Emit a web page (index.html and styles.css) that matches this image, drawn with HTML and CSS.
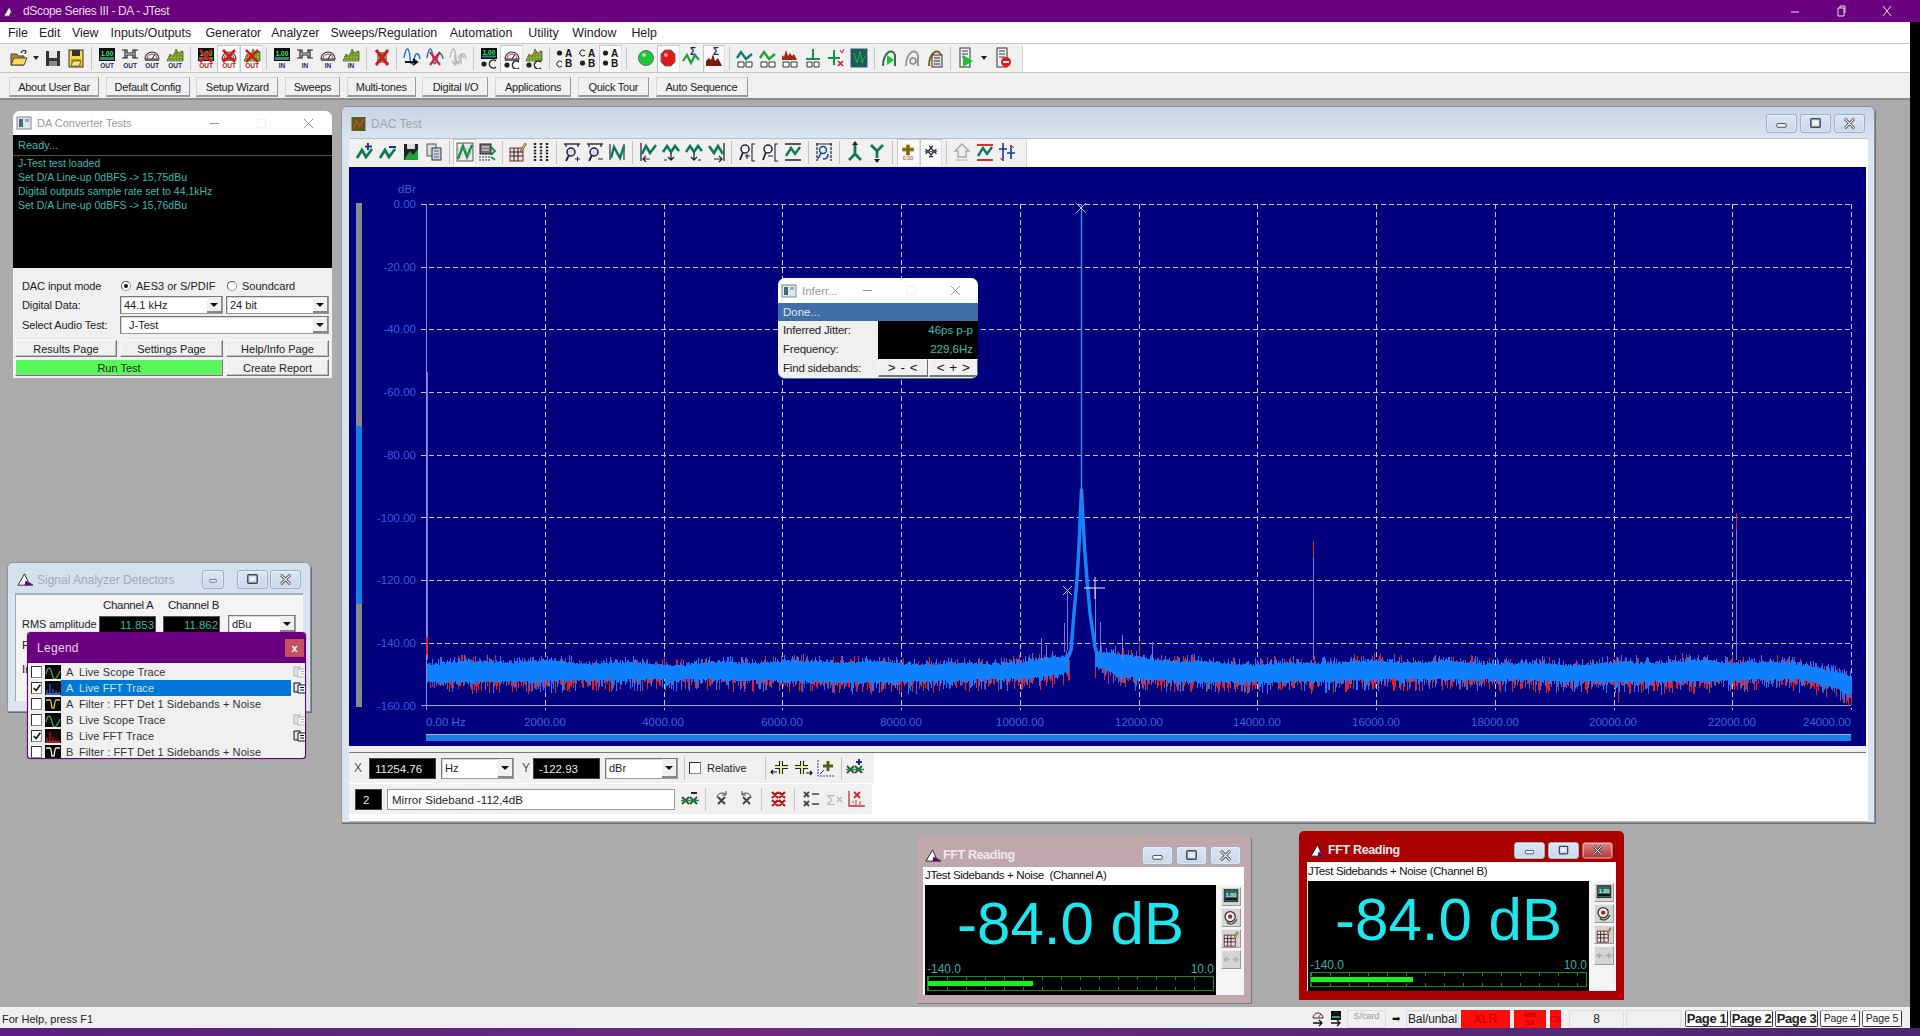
FILE: index.html
```html
<!DOCTYPE html>
<html lang="en">
<head>
<meta charset="utf-8">
<title>dScope Series III - DA - JTest</title>
<link rel="stylesheet" href="styles.css">
</head>
<body>
<svg class="defs" xmlns="http://www.w3.org/2000/svg">
<defs>
<symbol id="logo" viewBox="0 0 18 16"><path d="M1 14L8 2l4 9 5 3z" fill="#fff" stroke="#222" stroke-width="1"/><path d="M9 9l3 2 4 3H8z" fill="#6a007f"/></symbol>
<symbol id="w-min" viewBox="0 0 30 18"><rect x="10" y="9" width="10" height="4" rx="1" fill="#eef3f8" stroke="#445"/></symbol>
<symbol id="w-max" viewBox="0 0 30 18"><rect x="10" y="4" width="10" height="9" rx="1" fill="none" stroke="#445" stroke-width="1.5"/><rect x="13" y="7" width="4" height="3" fill="#fff"/></symbol>
<symbol id="w-close" viewBox="0 0 30 18"><path d="M10 4l10 10M20 4L10 14" stroke="#445" stroke-width="3"/><path d="M10 4l10 10M20 4L10 14" stroke="#fff" stroke-width="1.2"/></symbol>
<symbol id="win-ico" viewBox="0 0 16 16"><rect x="1" y="2" width="14" height="12" fill="#dfe6ee" stroke="#7a8696"/><rect x="3" y="4" width="4" height="8" fill="#3b6f70"/><rect x="9" y="4" width="4" height="3" fill="#9ab"/></symbol>
<symbol id="open" viewBox="0 0 18 22"><path d="M1 7h6l1 2h6v9H1z" fill="#b88f20" stroke="#444"/><path d="M4 11h13l-3 7H1z" fill="#f5dc5a" stroke="#444"/><path d="M11 6c1-3 3-3 5-2l-1 3" fill="none" stroke="#333" stroke-width="1.3"/></symbol>
<symbol id="save" viewBox="0 0 18 22"><rect x="2" y="4" width="14" height="15" fill="#333"/><rect x="5" y="4" width="8" height="7" fill="#e4e4e4"/><rect x="5" y="14" width="8" height="5" fill="#8a8a8a"/></symbol>
<symbol id="savef" viewBox="0 0 18 22"><rect x="2" y="3" width="14" height="17" fill="#f2d84a" stroke="#333"/><rect x="5" y="3" width="8" height="6" fill="#333"/><path d="M4 12h10v7H4z" fill="#b89a18"/><path d="M6 14h8l-2 5H4z" fill="#f8e878" stroke="#333" stroke-width=".6"/></symbol>
<symbol id="meter" viewBox="0 0 18 22"><rect x="1" y="1" width="16" height="13" fill="#0a0a0a"/><text class="il g" x="9" y="8.5">1.00</text><rect x="2" y="10" width="14" height="3" fill="#2a8a80"/></symbol>
<symbol id="filt" viewBox="0 0 18 22"><path d="M1 3h5v3h6V3h5M1 11h5V8h6v3h5M4 3v8M14 3v8" fill="none" stroke="#222" stroke-width="1.2"/></symbol>
<symbol id="gauge" viewBox="0 0 18 22"><path d="M2 12a7 7 0 0 1 14 0z" fill="#f0f0f0" stroke="#333" stroke-width="1.2"/><path d="M4 12a5 5 0 0 1 10 0" fill="none" stroke="#c04040"/><path d="M9 12l3-5" stroke="#222"/><rect x="2" y="12" width="14" height="2" fill="#666"/></symbol>
<symbol id="graph" viewBox="0 0 18 22"><path d="M1 14L4 7l3 3 3-8 3 5 4-3v10z" fill="#6c9a30" stroke="#2a5a20" stroke-width=".7"/><path d="M3 14V9M6 14V6M9 14V4M12 14V7M15 14V6" stroke="#d8d850" stroke-dasharray="1.5 1.5"/><path d="M2 10l14-6" stroke="#c85a20"/></symbol>
<symbol id="redx" viewBox="0 0 18 22"><path d="M3 3l12 12M15 3L3 15" stroke="#d81818" stroke-width="2.6"/></symbol>
<symbol id="xfull" viewBox="0 0 18 22"><rect x="4" y="5" width="10" height="11" fill="#7a9a70"/><path d="M3 3l12 15M15 3L3 18" stroke="#d81818" stroke-width="3"/></symbol>
<symbol id="wavearrow" viewBox="0 0 18 22"><path d="M1 11C3-1 6-1 7 11s4 2 5-2 4-3 5 3" fill="none" stroke="#2a6ac0" stroke-width="1.4"/><path d="M2 15h11M10 12l4 3-4 3" fill="none" stroke="#111" stroke-width="2"/></symbol>
<symbol id="wavered" viewBox="0 0 18 22"><path d="M1 11C3-1 6-1 7 11s4 2 5-2 4-3 5 3" fill="none" stroke="#2a6ac0" stroke-width="1.4"/><path d="M4 5l10 13M14 5L4 18" stroke="#d82030" stroke-width="2.2"/></symbol>
<symbol id="wavegrey" viewBox="0 0 18 22"><path d="M1 11C3-1 6-1 7 11s4 2 5-2 4-3 5 3" fill="none" stroke="#b8b8b8" stroke-width="1.4"/><path d="M6 8v9M3 14l3 4 3-4M12 17V8M9 11l3-4 3 4" fill="none" stroke="#bbb" stroke-width="1.5"/></symbol>
<symbol id="ac-m" viewBox="0 0 18 22"><rect x="1" y="1" width="16" height="11" fill="#0a0a0a"/><text class="il g" x="9" y="7.5">1.00</text><rect x="2" y="8.5" width="14" height="2" fill="#2a8a80"/><circle cx="4" cy="17" r="2.6" fill="#222"/><path d="M16 14a4 4 0 1 0 0 6" fill="none" stroke="#222" stroke-width="1.4"/></symbol>
<symbol id="ac-g" viewBox="0 0 18 22"><use href="#gauge" width="18" height="22"/><circle cx="4" cy="18" r="2.6" fill="#222"/><path d="M16 15a4 4 0 1 0 0 6" fill="none" stroke="#222" stroke-width="1.4"/></symbol>
<symbol id="ac-c" viewBox="0 0 18 22"><use href="#graph" width="18" height="22"/><circle cx="4" cy="18" r="2.6" fill="#222"/><path d="M16 15a4 4 0 1 0 0 6" fill="none" stroke="#222" stroke-width="1.4"/></symbol>
<symbol id="ab1" viewBox="0 0 18 22"><circle cx="3.5" cy="6" r="2.6" fill="#222"/><path d="M6 15a3 3 0 1 0 0 4" fill="none" stroke="#222"/><text class="il ab" x="12.5" y="9.5">A</text><text class="il ab" x="12.5" y="19.5">B</text></symbol>
<symbol id="ab2" viewBox="0 0 18 22"><path d="M6 4a3 3 0 1 0 0 4" fill="none" stroke="#222"/><circle cx="3.5" cy="16" r="2.6" fill="#222"/><text class="il ab" x="12.5" y="9.5">A</text><text class="il ab" x="12.5" y="19.5">B</text></symbol>
<symbol id="ab3" viewBox="0 0 18 22"><circle cx="3.5" cy="6" r="2.6" fill="#222"/><circle cx="3.5" cy="16" r="2.6" fill="#222"/><text class="il ab" x="12.5" y="9.5">A</text><text class="il ab" x="12.5" y="19.5">B</text></symbol>
<symbol id="go" viewBox="0 0 18 22"><circle cx="9" cy="11" r="7.5" fill="#18c838" stroke="#666"/><circle cx="7" cy="8" r="2" fill="#a8f0a8"/></symbol>
<symbol id="stop" viewBox="0 0 18 22"><path d="M6 3h6l4 4v8l-4 4H6l-4-4V7z" fill="#e01818" stroke="#666"/><circle cx="7" cy="8" r="2" fill="#f8a0a0"/></symbol>
<symbol id="sum1" viewBox="0 0 18 22"><text class="il sm" x="11" y="8">Σ</text><path d="M1 14l4-6 4 8 4-8 4 5" fill="none" stroke="#18a040" stroke-width="2.2"/></symbol>
<symbol id="sum2" viewBox="0 0 18 22"><text class="il sm" x="11" y="8">Σ</text><path d="M1 19V14l3-3 2 2 2-6 2 7 3-3 4 8z" fill="#7a1a10"/></symbol>
<symbol id="wv-b1" viewBox="0 0 18 22"><path d="M1 11l4-6 5 7 6-5" fill="none" stroke="#1a7a70" stroke-width="2.4"/><path d="M2 15h6v5H2zM10 15h6v5h-6z" fill="#fff" stroke="#333"/></symbol>
<symbol id="wv-b2" viewBox="0 0 18 22"><path d="M1 11l4-6 5 7 6-5" fill="none" stroke="#20a040" stroke-width="2.4"/><path d="M2 15h6v5H2zM10 15h6v5h-6z" fill="#fff" stroke="#333"/></symbol>
<symbol id="wv-b3" viewBox="0 0 18 22"><path d="M1 13V8l2 2 2-7 2 6 2-3 2 3 2-2 3 6z" fill="#a02818"/><path d="M2 15h6v5H2zM10 15h6v5h-6z" fill="#fff" stroke="#333"/></symbol>
<symbol id="pk-b" viewBox="0 0 18 22"><path d="M9 2v11M2 12h14" stroke="#18904a" stroke-width="2"/><path d="M3 15h5v5H3zM10 15h5v5h-5z" fill="#fff" stroke="#333"/></symbol>
<symbol id="pk-x" viewBox="0 0 18 22"><path d="M7 3v15M1 11h12" stroke="#18904a" stroke-width="2"/><path d="M13 3l2 3 2-4" fill="none" stroke="#c02020"/><path d="M11 14l5 5M16 14l-5 5" stroke="#d02020" stroke-width="1.6"/></symbol>
<symbol id="scope" viewBox="0 0 18 22"><rect x="1" y="2" width="16" height="18" fill="#1a5a58" stroke="#39577a"/><path d="M4 6l3 10 3-12 2 12 3-7" fill="none" stroke="#28b040"/></symbol>
<symbol id="seq1" viewBox="0 0 18 22"><path d="M3 19C3 6 12 0 15 8v11" fill="none" stroke="#307050" stroke-width="2"/><path d="M7 8l7 5-7 5z" fill="#20c030"/></symbol>
<symbol id="seq2" viewBox="0 0 18 22"><path d="M3 19C3 6 12 0 15 8v11" fill="none" stroke="#9a9a9a" stroke-width="2"/><circle cx="10" cy="14" r="3" fill="none" stroke="#8a8a8a" stroke-width="1.6"/></symbol>
<symbol id="seq3" viewBox="0 0 18 22"><path d="M3 19C3 6 12 0 15 8v11" fill="none" stroke="#806020" stroke-width="2"/><rect x="6" y="8" width="10" height="12" fill="#ddd" stroke="#333"/><path d="M8 11h6M8 14h6M8 17h6" stroke="#333"/></symbol>
<symbol id="doc-go" viewBox="0 0 18 22"><rect x="3" y="1" width="10" height="19" fill="#f4f4f4" stroke="#333"/><path d="M5 4h6M5 7h6M5 10h3" stroke="#333"/><path d="M6 8l10 6-10 6z" fill="#20c030"/></symbol>
<symbol id="doc-st" viewBox="0 0 18 22"><rect x="3" y="1" width="10" height="19" fill="#f4f4f4" stroke="#333"/><path d="M5 4h6M5 7h6M5 10h6" stroke="#333"/><circle cx="12" cy="15" r="5" fill="#e01818"/><path d="M9 15h6" stroke="#fff" stroke-width="2"/></symbol>
<symbol id="wplus" viewBox="0 0 18 22"><path d="M1 17l5-8 4 7 6-8" fill="none" stroke="#107858" stroke-width="2.8"/><path d="M12 2v7M9 5.500h7" stroke="#1a3a88" stroke-width="2"/></symbol>
<symbol id="wminus" viewBox="0 0 18 22"><path d="M1 17l5-8 4 7 6-8" fill="none" stroke="#107858" stroke-width="2.8"/><path d="M10 6h7" stroke="#1a3a88" stroke-width="2"/></symbol>
<symbol id="wsave" viewBox="0 0 18 22"><rect x="2" y="3" width="14" height="16" fill="#222"/><rect x="5" y="3" width="8" height="5" fill="#ddd"/><path d="M3 17l5-7 3 4 5-6v11H3z" fill="#20a040"/></symbol>
<symbol id="copy" viewBox="0 0 18 22"><rect x="2" y="3" width="9" height="12" fill="#ddd" stroke="#555"/><rect x="7" y="7" width="9" height="12" fill="#c8d4e4" stroke="#334"/><path d="M9 10h5M9 13h5M9 16h5" stroke="#667"/></symbol>
<symbol id="chart" viewBox="0 0 18 22"><rect x="1" y="2" width="16" height="18" fill="#e8e8e8" stroke="#556"/><path d="M2 18l5-13 4 11 5-12" fill="none" stroke="#109040" stroke-width="2.4"/><path d="M2 8h14M2 13h14" stroke="#999" stroke-dasharray="1 1"/></symbol>
<symbol id="print" viewBox="0 0 18 22"><rect x="2" y="3" width="11" height="10" fill="#777" stroke="#222"/><path d="M4 6h7M4 9h7" stroke="#eee"/><path d="M1 16h12M1 19h12" stroke="#333" stroke-dasharray="2 1"/><path d="M13 6l4 4-4 4M13 16l4 3" fill="none" stroke="#109040" stroke-width="1.8"/></symbol>
<symbol id="table" viewBox="0 0 18 22"><rect x="1" y="7" width="13" height="13" fill="#f2dede" stroke="#822"/><path d="M1 11h13M1 15h13M5 7v13M9 7v13" stroke="#222"/><path d="M11 10l5-8 1.500 1-5 8z" fill="#e8c040" stroke="#333" stroke-width=".6"/></symbol>
<symbol id="nums" viewBox="0 0 18 22"><path d="M3 2v19M9 2v19M15 2v19" stroke="#222" stroke-width="2.400" stroke-dasharray="2 1.200"/><path d="M1 8h16M1 14h16" stroke="#f0f0f0"/></symbol>
<symbol id="zoomp" viewBox="0 0 18 22"><path d="M1 3h16M3 3v3M15 3v3" stroke="#333" stroke-width="1.400"/><circle cx="8" cy="11" r="4" fill="#dde" stroke="#223" stroke-width="1.500"/><path d="M6 14l-3 6" stroke="#223" stroke-width="1.800"/><path d="M12 18h5M14.500 15.500v5" stroke="#223"/></symbol>
<symbol id="zoomm" viewBox="0 0 18 22"><path d="M1 3h16M3 3v3M15 3v3" stroke="#333" stroke-width="1.400"/><circle cx="8" cy="11" r="4" fill="#dde" stroke="#223" stroke-width="1.500"/><path d="M6 14l-3 6" stroke="#223" stroke-width="1.800"/><path d="M12 18h5" stroke="#223"/></symbol>
<symbol id="nwave" viewBox="0 0 18 22"><path d="M2 3v16M16 3v16" stroke="#334" stroke-width="1.200"/><path d="M3 17l3-11 6 11 4-12" fill="none" stroke="#107858" stroke-width="2.400"/></symbol>
<symbol id="wl" viewBox="0 0 18 22"><path d="M2 2v18" stroke="#334" stroke-width="1.400"/><path d="M3 13l4-8 4 7 6-8" fill="none" stroke="#107858" stroke-width="2.600"/><path d="M11 18H4M7 15l-3 3 3 3" fill="none" stroke="#223" stroke-width="1.200"/></symbol>
<symbol id="wm1" viewBox="0 0 18 22"><path d="M1 11l4-6 4 6 4-6 4 5" fill="none" stroke="#107858" stroke-width="2.600"/><path d="M9 12v7M6 16l3 3 3-3" fill="none" stroke="#223" stroke-width="1.300"/><path d="M5 19H2" stroke="#223"/></symbol>
<symbol id="wm2" viewBox="0 0 18 22"><path d="M1 11l4-6 4 6 4-6 4 5" fill="none" stroke="#107858" stroke-width="2.600"/><path d="M9 12v7M6 16l3 3 3-3" fill="none" stroke="#223" stroke-width="1.300"/><path d="M16 19h-3" stroke="#223"/></symbol>
<symbol id="wr" viewBox="0 0 18 22"><path d="M16 2v18" stroke="#334" stroke-width="1.400"/><path d="M1 5l5 7 4-7 5 8" fill="none" stroke="#107858" stroke-width="2.600"/><path d="M6 18h8M11 15l3 3-3 3" fill="none" stroke="#223" stroke-width="1.200"/></symbol>
<symbol id="magl" viewBox="0 0 18 22"><circle cx="7" cy="8" r="4" fill="#fff" stroke="#223" stroke-width="1.500"/><path d="M5 11l-3 8" stroke="#223" stroke-width="1.800"/><path d="M7 15h5M9 13v5M17 3h-3v17h3" fill="none" stroke="#223" stroke-width="1.100"/></symbol>
<symbol id="magm" viewBox="0 0 18 22"><circle cx="7" cy="8" r="4" fill="#fff" stroke="#223" stroke-width="1.500"/><path d="M5 11l-3 8" stroke="#223" stroke-width="1.800"/><path d="M7 15h5M17 3h-3v17h3" fill="none" stroke="#223" stroke-width="1.100"/></symbol>
<symbol id="wbars" viewBox="0 0 18 22"><path d="M1 3h16M1 19h16" stroke="#223" stroke-width="1.300"/><path d="M2 15l5-8 4 6 5-7" fill="none" stroke="#107858" stroke-width="2.400"/></symbol>
<symbol id="autoz" viewBox="0 0 18 22"><path d="M2 2v18M16 2v18" stroke="#223" stroke-width="1.200" stroke-dasharray="3 1"/><path d="M1 3h16" stroke="#223"/><circle cx="8" cy="9" r="3.500" fill="#dfe" stroke="#1a3a88" stroke-width="1.400"/><path d="M6 12l-3 6M13 13c0 5-3 5-5 5" fill="none" stroke="#1a3a88" stroke-width="1.500"/></symbol>
<symbol id="fk-up" viewBox="0 0 18 22"><path d="M9 11v9M9 11L3 5M9 11l6-6" fill="none" stroke="#107858" stroke-width="2.800" transform="rotate(180 9 12)"/><path d="M9 0l3 4H6z" fill="#223"/></symbol>
<symbol id="fk-dn" viewBox="0 0 18 22"><path d="M9 10v7M9 10L3 4M9 10l6-6" fill="none" stroke="#107858" stroke-width="2.800"/><path d="M9 22l3-4H6z" fill="#223"/></symbol>
<symbol id="plusred" viewBox="0 0 22 22"><path d="M11 2v13M4 8h14" stroke="#b08a10" stroke-width="5"/><path d="M11 2v13M4 8h14" stroke="#506830" stroke-width="2"/><text class="il rd" x="11" y="21">0.00</text></symbol>
<symbol id="xx" viewBox="0 0 20 22"><path d="M4 8l5 5M9 8l-5 5M11 8l5 5M16 8l-5 5M8 4l4 5M12 4L8 9M8 12l4 5M12 12l-4 5" stroke="#223" stroke-width="1.400"/><path d="M3 10.500h14" stroke="#107858"/></symbol>
<symbol id="hat" viewBox="0 0 18 22"><path d="M9 3L2 10h3v6h8v-6h3z" fill="#eee" stroke="#aaa" stroke-width="1.500"/><path d="M3 19h12" stroke="#aaa"/></symbol>
<symbol id="wredbars" viewBox="0 0 18 22"><path d="M1 4h16M1 19h16" stroke="#d03030" stroke-width="1.800"/><path d="M2 15l5-8 4 6 5-7" fill="none" stroke="#107858" stroke-width="2.400"/></symbol>
<symbol id="spread" viewBox="0 0 18 22"><path d="M5 2v18M1 8h8M13 4v14M9 12h8" stroke="#1a3a88" stroke-width="1.600"/><path d="M13 4l3 3M5 20l-3-3" stroke="#c02020"/></symbol>
<symbol id="cur-a" viewBox="0 0 20 20"><path d="M11 3v13M5 9h13" stroke="#222" stroke-width="4"/><path d="M11 3v13M5 9h13" stroke="#e8e8a0" stroke-width="2"/><path d="M7 14H1M3 12l-2 2 2 2" fill="none" stroke="#111" stroke-width="1.200"/></symbol>
<symbol id="cur-b" viewBox="0 0 20 20"><path d="M9 3v13M2 9h13" stroke="#222" stroke-width="4"/><path d="M9 3v13M2 9h13" stroke="#e8e8a0" stroke-width="2"/><path d="M13 15h6M17 13l2 2-2 2" fill="none" stroke="#111" stroke-width="1.200"/></symbol>
<symbol id="cur-c" viewBox="0 0 20 20"><path d="M2 2v16h16" fill="none" stroke="#334488" stroke-dasharray="2 1"/><path d="M12 3v10M7 8h10" stroke="#556020" stroke-width="3"/><path d="M4 16l4-4" stroke="#1a3a88"/></symbol>
<symbol id="cur-d" viewBox="0 0 20 20"><path d="M2 8l7 7M9 8l-7 7M10 8l7 7M17 8l-7 7" stroke="#335030" stroke-width="1.800"/><path d="M1 11.500h18" stroke="#109040" stroke-width="1.500"/><path d="M14 1v6M11 4h6" stroke="#1a2a90" stroke-width="2"/></symbol>
<symbol id="cur-e" viewBox="0 0 20 20"><path d="M2 8l7 7M9 8l-7 7M10 8l7 7M17 8l-7 7" stroke="#335030" stroke-width="1.800"/><path d="M1 11.500h18" stroke="#109040" stroke-width="1.500"/><path d="M11 4h6" stroke="#222" stroke-width="2"/></symbol>
<symbol id="cur-f" viewBox="0 0 20 20"><path d="M5 8l7 7M12 8l-7 7" stroke="#444" stroke-width="2"/><path d="M4 9c0-6 8-6 9-3M13 2v4h-4" fill="none" stroke="#444"/></symbol>
<symbol id="cur-g" viewBox="0 0 20 20"><path d="M7 8l7 7M14 8l-7 7" stroke="#444" stroke-width="2"/><path d="M15 9c0-6-8-6-9-3M6 2v4h4" fill="none" stroke="#444"/></symbol>
<symbol id="cur-h" viewBox="0 0 20 20"><path d="M3 3l6 6M9 3L3 9M10 3l6 6M16 3l-6 6M3 11l6 6M9 11l-6 6M10 11l6 6M16 11l-6 6" stroke="#c01818" stroke-width="2.200"/></symbol>
<symbol id="cur-i" viewBox="0 0 20 20"><path d="M2 3l5 5M7 3L2 8M2 12l5 5M7 12l-5 5" stroke="#444" stroke-width="1.800"/><path d="M10 5h7M10 15h7" stroke="#444" stroke-width="1.500"/></symbol>
<symbol id="cur-j" viewBox="0 0 20 20"><text class="il sg" x="7" y="16">Σ</text><path d="M13 8l5 5M18 8l-5 5" stroke="#bbb" stroke-width="1.500"/></symbol>
<symbol id="cur-k" viewBox="0 0 20 20"><path d="M2 2v15h16" fill="none" stroke="#c03030" stroke-width="1.300"/><path d="M7 3l6 6M13 3L7 9" stroke="#c03030" stroke-width="1.800"/><path d="M5 13h2M9 11v5M13 12v4" stroke="#c03030"/></symbol>
<symbol id="sd-m" viewBox="0 0 20 20"><rect x="2" y="2" width="16" height="14" fill="#2a6a68" stroke="#222"/><text class="il g2" x="10" y="10">1.00</text><rect x="3" y="12" width="14" height="2" fill="#0a0a0a"/></symbol>
<symbol id="sd-g" viewBox="0 0 20 20"><circle cx="9" cy="9" r="6" fill="#eee" stroke="#333" stroke-width="1.500"/><circle cx="9" cy="9" r="2.500" fill="#b02020"/><path d="M5 16c4 3 9 2 12-4" fill="none" stroke="#333" stroke-width="1.400"/></symbol>
<symbol id="sd-t" viewBox="0 0 20 20"><rect x="2" y="6" width="13" height="13" fill="#f2dede" stroke="#622"/><path d="M2 10h13M2 14h13M6 6v13M10 6v13" stroke="#222"/><path d="M13 10l4-8 1.500 1-4 8z" fill="#e8c040" stroke="#333" stroke-width=".6"/></symbol>
<symbol id="sd-a" viewBox="0 0 20 20"><path d="M8 10l-4 0M5 7l-3 3 3 3M12 10h4M15 7l3 3-3 3" fill="none" stroke="#aaa" stroke-width="1.500"/></symbol>
<symbol id="l-w" viewBox="0 0 16 14"><rect width="16" height="14" fill="#080808"/><path d="M1 9c2-8 4-8 6 0s4 6 8-3" fill="none" stroke="#38b048" stroke-width="1.300"/></symbol>
<symbol id="l-fb" viewBox="0 0 16 14"><rect width="16" height="14" fill="#080818"/><path d="M1 13h14" stroke="#3a78e8" stroke-width="1.600"/><path d="M5 13V3M2 13V9M8 13V8M11 13v-3M14 13v-2" stroke="#3a78e8"/></symbol>
<symbol id="l-fr" viewBox="0 0 16 14"><rect width="16" height="14" fill="#100808"/><path d="M1 13h14" stroke="#e02020" stroke-width="1.600"/><path d="M5 13V3M2 13V9M8 13V8M11 13v-3M14 13v-2" stroke="#e02020"/></symbol>
<symbol id="l-fy" viewBox="0 0 16 14"><rect width="16" height="14" fill="#080808"/><path d="M1 3h4c1 0 1 2 2 8h2c1-6 1-8 2-8h4" fill="none" stroke="#d8c830" stroke-width="1.300"/></symbol>
<symbol id="l-fw" viewBox="0 0 16 14"><rect width="16" height="14" fill="#080808"/><path d="M1 3h4c1 0 1 2 2 8h2c1-6 1-8 2-8h4" fill="none" stroke="#f0f0f0" stroke-width="1.300"/></symbol>
<symbol id="doc2" viewBox="0 0 14 12"><path d="M1 1h6v9H1z" fill="#dfe0ea" stroke="currentColor"/><path d="M5 3h8v8H5z" fill="#fff" stroke="currentColor"/><path d="M7 5.500h4M7 8h4" stroke="currentColor"/></symbol>
<symbol id="tick" viewBox="0 0 12 12"><path d="M2 6l3 3 5-7" fill="none" stroke="#111" stroke-width="2"/></symbol>
<symbol id="sb-g" viewBox="0 0 14 18"><path d="M2 8a5 5 0 0 1 10 0z" fill="#eee" stroke="#333"/><path d="M7 8l3-4" stroke="#b02020"/><path d="M2 13h8M8 10l3 3-3 3" fill="none" stroke="#111" stroke-width="1.300"/></symbol>
<symbol id="sb-m" viewBox="0 0 14 18"><rect x="2" y="1" width="10" height="9" fill="#111"/><rect x="3" y="6" width="8" height="2" fill="#2a9a80"/><path d="M2 13h8M8 10l3 3-3 3" fill="none" stroke="#111" stroke-width="1.300"/></symbol>
</defs>
</svg>

<div class="app">
  <header class="titlebar">
    <svg class="logo"><use href="#logo"/></svg>
    <span class="apptitle">dScope Series III - DA - JTest</span>
    <div class="caption">
      <svg viewBox="0 0 12 12"><path d="M2 7h8"/></svg>
      <svg viewBox="0 0 12 12"><path d="M3 3h6v8H3zM5 3V1h5v7"/></svg>
      <svg viewBox="0 0 12 12"><path d="M2 1l8 10M10 1L2 11"/></svg>
    </div>
  </header>
  <div class="content">
    <nav class="menubar">
      <span>File</span><span>Edit</span><span>View</span><span>Inputs/Outputs</span><span>Generator</span><span>Analyzer</span><span>Sweeps/Regulation</span><span>Automation</span><span>Utility</span><span>Window</span><span>Help</span>
    </nav>
    <div class="toolrow">
      <div class="tools main-tools">
        <i class="tb"><svg class="i"><use href="#open"/></svg></i><b class="drop"></b>
        <i class="tb"><svg class="i"><use href="#save"/></svg></i>
        <i class="tb"><svg class="i"><use href="#savef"/></svg></i>
        <s class="sep"></s>
        <i class="tb"><svg class="i" viewBox="0 0 18 22"><use href="#meter"/><text class="il" x="9" y="21">OUT</text></svg></i>
        <i class="tb"><svg class="i" viewBox="0 0 18 22"><use href="#filt"/><text class="il" x="9" y="21">OUT</text></svg></i>
        <i class="tb"><svg class="i" viewBox="0 0 18 22"><use href="#gauge"/><text class="il" x="9" y="21">OUT</text></svg></i>
        <i class="tb"><svg class="i" viewBox="0 0 18 22"><use href="#graph"/><text class="il" x="9" y="21">OUT</text></svg></i>
        <s class="sep"></s>
        <i class="tb"><svg class="i" viewBox="0 0 18 22"><use href="#meter"/><use href="#redx"/><text class="il r" x="9" y="21">OUT</text></svg></i>
        <i class="tb on"><svg class="i" viewBox="0 0 18 22"><use href="#gauge"/><use href="#redx"/><text class="il r" x="9" y="21">OUT</text></svg></i>
        <i class="tb on"><svg class="i" viewBox="0 0 18 22"><use href="#graph"/><use href="#redx"/><text class="il r" x="9" y="21">OUT</text></svg></i>
        <s class="sep"></s>
        <i class="tb"><svg class="i" viewBox="0 0 18 22"><use href="#meter"/><text class="il" x="9" y="21">IN</text></svg></i>
        <i class="tb"><svg class="i" viewBox="0 0 18 22"><use href="#filt"/><text class="il" x="9" y="21">IN</text></svg></i>
        <i class="tb"><svg class="i" viewBox="0 0 18 22"><use href="#gauge"/><text class="il" x="9" y="21">IN</text></svg></i>
        <i class="tb"><svg class="i" viewBox="0 0 18 22"><use href="#graph"/><text class="il" x="9" y="21">IN</text></svg></i>
        <s class="sep"></s>
        <i class="tb"><svg class="i"><use href="#xfull"/></svg></i>
        <s class="sep"></s>
        <i class="tb"><svg class="i"><use href="#wavearrow"/></svg></i>
        <i class="tb"><svg class="i"><use href="#wavered"/></svg></i>
        <i class="tb"><svg class="i"><use href="#wavegrey"/></svg></i>
        <s class="sep"></s>
        <i class="tb"><svg class="i"><use href="#ac-m"/></svg></i>
        <i class="tb on"><svg class="i"><use href="#ac-g"/></svg></i>
        <i class="tb"><svg class="i"><use href="#ac-c"/></svg></i>
        <s class="sep"></s>
        <i class="tb"><svg class="i"><use href="#ab1"/></svg></i>
        <i class="tb"><svg class="i"><use href="#ab2"/></svg></i>
        <i class="tb on"><svg class="i"><use href="#ab3"/></svg></i>
        <s class="sep wide"></s>
        <i class="tb"><svg class="i"><use href="#go"/></svg></i>
        <i class="tb on"><svg class="i"><use href="#stop"/></svg></i>
        <i class="tb"><svg class="i"><use href="#sum1"/></svg></i>
        <i class="tb on"><svg class="i"><use href="#sum2"/></svg></i>
        <s class="sep"></s>
        <i class="tb"><svg class="i"><use href="#wv-b1"/></svg></i>
        <i class="tb"><svg class="i"><use href="#wv-b2"/></svg></i>
        <i class="tb"><svg class="i"><use href="#wv-b3"/></svg></i>
        <i class="tb"><svg class="i"><use href="#pk-b"/></svg></i>
        <i class="tb"><svg class="i"><use href="#pk-x"/></svg></i>
        <i class="tb"><svg class="i"><use href="#scope"/></svg></i>
        <s class="sep"></s>
        <i class="tb"><svg class="i"><use href="#seq1"/></svg></i>
        <i class="tb"><svg class="i"><use href="#seq2"/></svg></i>
        <i class="tb"><svg class="i"><use href="#seq3"/></svg></i>
        <s class="sep"></s>
        <i class="tb"><svg class="i"><use href="#doc-go"/></svg></i><b class="drop narrow"></b>
        <i class="tb"><svg class="i"><use href="#doc-st"/></svg></i>
      </div>
    </div>
    <div class="userbar">
      <button class="ub w90">About User Bar</button>
      <button class="ub w84">Default Config</button>
      <button class="ub w82">Setup Wizard</button>
      <button class="ub w55">Sweeps</button>
      <button class="ub w69">Multi-tones</button>
      <button class="ub w66">Digital I/O</button>
      <button class="ub w76">Applications</button>
      <button class="ub w71">Quick Tour</button>
      <button class="ub w92">Auto Sequence</button>
    </div>

    <main class="desktop">
      <!-- DA Converter Tests -->
      <section class="win10 da">
        <div class="w10title">
          <svg class="wico"><use href="#win-ico"/></svg>
          <span class="w10name">DA Converter Tests</span>
          <div class="w10caps da-caps">
            <svg viewBox="0 0 12 12"><path d="M1 6h10"/></svg>
            <svg viewBox="0 0 12 12" class="faint"><path d="M1.500 1.500h9v9h-9z"/></svg>
            <svg viewBox="0 0 12 12"><path d="M1 1l10 10M11 1L1 11"/></svg>
          </div>
        </div>
        <div class="blackpanel">
          <div class="ready">Ready...</div>
          <div class="log">
            <div>J-Test test loaded</div>
            <div>Set D/A Line-up 0dBFS -&gt; 15,75dBu</div>
            <div>Digital outputs sample rate set to 44,1kHz</div>
            <div>Set D/A Line-up 0dBFS -&gt; 15,76dBu</div>
          </div>
        </div>
        <div class="daform">
          <label class="lab">DAC input mode</label>
          <label class="rad"><i class="radio checked"></i>AES3 or S/PDIF</label>
          <label class="rad"><i class="radio"></i>Soundcard</label>
          <label class="lab">Digital Data:</label>
          <div class="sel"><span>44.1 kHz</span><b></b></div>
          <div class="sel"><span>24 bit</span><b></b></div>
          <label class="lab">Select Audio Test:</label>
          <div class="sel span2 indent"><span>J-Test</span><b></b></div>
          <button class="pb">Results Page</button>
          <button class="pb">Settings Page</button>
          <button class="pb">Help/Info Page</button>
          <button class="pb run">Run Test</button>
          <button class="pb">Create Report</button>
        </div>
      </section>

      <!-- Signal Analyzer Detectors -->
      <section class="aero det">
        <div class="aerotitle">
          <svg class="aico"><use href="#logo"/></svg>
          <span class="aname">Signal Analyzer Detectors</span>
          <div class="wbtns">
            <i class="wb"><svg><use href="#w-min"/></svg></i>
            <i class="wb"><svg><use href="#w-max"/></svg></i>
            <i class="wb"><svg><use href="#w-close"/></svg></i>
          </div>
        </div>
        <div class="detbody">
          <div class="dethead"><span>Channel A</span><span>Channel B</span></div>
          <div class="detrow">
            <span class="detlab">RMS amplitude</span>
            <output class="lcd">11.853</output>
            <output class="lcd">11.862</output>
            <div class="sel detsel"><span>dBu</span><b></b></div>
          </div>
          <div class="detcut">F</div>
          <div class="detcut in">In</div>
        </div>
      </section>

      <!-- Legend -->
      <section class="legend">
        <div class="legtitle"><span>Legend</span><button class="legx">x</button></div>
        <ul class="leglist">
          <li><i class="chk"></i><svg class="lic"><use href="#l-w"/></svg><span class="lc">A</span><span class="ln">Live Scope Trace</span><svg class="doc off"><use href="#doc2"/></svg></li>
          <li class="sel-row"><i class="chk"><svg><use href="#tick"/></svg></i><svg class="lic"><use href="#l-fb"/></svg><span class="hi"><span class="lc">A</span><span class="ln">Live FFT Trace</span></span><svg class="doc"><use href="#doc2"/></svg></li>
          <li><i class="chk"></i><svg class="lic"><use href="#l-fy"/></svg><span class="lc">A</span><span class="ln">Filter : FFT Det 1 Sidebands + Noise</span></li>
          <li><i class="chk"></i><svg class="lic"><use href="#l-w"/></svg><span class="lc">B</span><span class="ln">Live Scope Trace</span><svg class="doc off"><use href="#doc2"/></svg></li>
          <li><i class="chk"><svg><use href="#tick"/></svg></i><svg class="lic"><use href="#l-fr"/></svg><span class="lc">B</span><span class="ln">Live FFT Trace</span><svg class="doc"><use href="#doc2"/></svg></li>
          <li><i class="chk"></i><svg class="lic"><use href="#l-fw"/></svg><span class="lc">B</span><span class="ln">Filter : FFT Det 1 Sidebands + Noise</span></li>
        </ul>
      </section>

      <!-- DAC Test -->
      <section class="aero dac">
        <div class="aerotitle dactitle">
          <svg class="dico" viewBox="0 0 16 16"><rect width="16" height="16" fill="#5a5a20"/><path d="M2 14l4-10 3 7 5-9" fill="none" stroke="#c05020" stroke-width="1.500"/></svg>
          <span class="aname">DAC Test</span>
          <div class="wbtns">
            <i class="wb"><svg><use href="#w-min"/></svg></i>
            <i class="wb"><svg><use href="#w-max"/></svg></i>
            <i class="wb"><svg><use href="#w-close"/></svg></i>
          </div>
        </div>
        <div class="dacclient">
          <div class="toolrow2">
            <div class="tools dac-tools">
              <i class="tc"><svg class="i"><use href="#wplus"/></svg></i>
              <i class="tc"><svg class="i"><use href="#wminus"/></svg></i>
              <i class="tc"><svg class="i"><use href="#wsave"/></svg></i>
              <i class="tc"><svg class="i"><use href="#copy"/></svg></i>
              <s class="sep"></s>
              <i class="tc on"><svg class="i"><use href="#chart"/></svg></i>
              <i class="tc"><svg class="i"><use href="#print"/></svg></i>
              <s class="sep"></s>
              <i class="tc"><svg class="i"><use href="#table"/></svg></i>
              <i class="tc"><svg class="i"><use href="#nums"/></svg></i>
              <s class="sep"></s>
              <i class="tc"><svg class="i"><use href="#zoomp"/></svg></i>
              <i class="tc"><svg class="i"><use href="#zoomm"/></svg></i>
              <i class="tc"><svg class="i"><use href="#nwave"/></svg></i>
              <s class="sep"></s>
              <i class="tc"><svg class="i"><use href="#wl"/></svg></i>
              <i class="tc"><svg class="i"><use href="#wm1"/></svg></i>
              <i class="tc"><svg class="i"><use href="#wm2"/></svg></i>
              <i class="tc"><svg class="i"><use href="#wr"/></svg></i>
              <s class="sep"></s>
              <i class="tc"><svg class="i"><use href="#magl"/></svg></i>
              <i class="tc"><svg class="i"><use href="#magm"/></svg></i>
              <i class="tc"><svg class="i"><use href="#wbars"/></svg></i>
              <s class="sep"></s>
              <i class="tc"><svg class="i"><use href="#autoz"/></svg></i>
              <s class="sep"></s>
              <i class="tc"><svg class="i"><use href="#fk-up"/></svg></i>
              <i class="tc"><svg class="i"><use href="#fk-dn"/></svg></i>
              <s class="sep"></s>
              <i class="tc on"><svg class="i"><use href="#plusred"/></svg></i>
              <i class="tc on"><svg class="i"><use href="#xx"/></svg></i>
              <s class="sep"></s>
              <i class="tc"><svg class="i"><use href="#hat"/></svg></i>
              <i class="tc"><svg class="i"><use href="#wredbars"/></svg></i>
              <i class="tc"><svg class="i"><use href="#spread"/></svg></i>
            </div>
          </div>

          <div class="plot">
            <svg id="spectrum" class="plotsvg" viewBox="349 167 1517 579" xmlns="http://www.w3.org/2000/svg">
              <rect x="349" y="167" width="1517" height="579" class="plotbg"/>
              <rect x="356" y="203" width="6" height="504" class="railgrey"/>
              <rect x="356" y="426" width="6" height="178" class="railblue"/>
              <g id="grid"></g>
              <g class="ylabels">
                <text x="416" y="193">dBr</text>
                <text x="416" y="208">0.00</text>
                <text x="416" y="271">-20.00</text>
                <text x="416" y="333">-40.00</text>
                <text x="416" y="396">-60.00</text>
                <text x="416" y="459">-80.00</text>
                <text x="416" y="522">-100.00</text>
                <text x="416" y="584">-120.00</text>
                <text x="416" y="647">-140.00</text>
                <text x="416" y="710">-160.00</text>
              </g>
              <g class="xlabels">
                <text x="426" y="726" class="start">0.00 Hz</text>
                <text x="545" y="726">2000.00</text>
                <text x="663" y="726">4000.00</text>
                <text x="782" y="726">6000.00</text>
                <text x="901" y="726">8000.00</text>
                <text x="1020" y="726">10000.00</text>
                <text x="1139" y="726">12000.00</text>
                <text x="1257" y="726">14000.00</text>
                <text x="1376" y="726">16000.00</text>
                <text x="1495" y="726">18000.00</text>
                <text x="1613" y="726">20000.00</text>
                <text x="1732" y="726">22000.00</text>
                <text x="1851" y="726" class="end">24000.00</text>
              </g>
              <path id="tr-red" class="trred"/>
              <path id="tr-blue" class="trblue"/>
              <path id="tr-spikes" class="trspike"/>
              <path id="tr-spikes-red" class="trspikered"/>
              <path id="tr-peak" class="trpeak"/>
              <path id="tr-line" class="trline"/>
              <g class="markers">
                <path d="M1076 203l10 10M1086 203l-10 10"/>
                <path d="M1063 586l9 9M1072 586l-9 9"/>
                <path class="crossh" d="M1084 588h21M1095 577v22"/>
              </g>
              <rect x="426" y="734" width="1425" height="7" class="hbar"/>
              <rect x="426" y="734" width="1425" height="1" class="hbartop"/>
            </svg>
          </div>
          <div class="plotfoot"></div>

          <div class="cursorrow first">
            <span class="axis">X</span>
            <output class="blk w67">11254.76</output>
            <div class="sel w73 plain"><span>Hz</span><b></b></div>
            <span class="axis y">Y</span>
            <output class="blk w67">-122.93</output>
            <div class="sel w73 plain"><span>dBr</span><b></b></div>
            <s class="sep s1"></s>
            <i class="chk big"></i>
            <span class="rel">Relative</span>
            <s class="sep s2"></s>
            <i class="tc"><svg class="ci"><use href="#cur-a"/></svg></i>
            <i class="tc"><svg class="ci"><use href="#cur-b"/></svg></i>
            <i class="tc"><svg class="ci"><use href="#cur-c"/></svg></i>
            <s class="sep tight"></s>
            <i class="tc"><svg class="ci"><use href="#cur-d"/></svg></i>
          </div>
          <div class="cursorrow second">
            <output class="blk w27">2</output>
            <div class="txt">Mirror Sideband -112,4dB</div>
            <i class="tc"><svg class="ci"><use href="#cur-e"/></svg></i>
            <s class="sep roomy"></s>
            <i class="tc"><svg class="ci"><use href="#cur-f"/></svg></i>
            <i class="tc"><svg class="ci"><use href="#cur-g"/></svg></i>
            <s class="sep roomy"></s>
            <i class="tc"><svg class="ci"><use href="#cur-h"/></svg></i>
            <s class="sep roomy"></s>
            <i class="tc"><svg class="ci"><use href="#cur-i"/></svg></i>
            <i class="tc"><svg class="ci"><use href="#cur-j"/></svg></i>
            <i class="tc"><svg class="ci"><use href="#cur-k"/></svg></i>
          </div>
          <div class="dacbottom"></div>
        </div>
      </section>

      <!-- Inferred jitter dialog -->
      <section class="win10 inferr">
        <div class="w10title">
          <svg class="wico"><use href="#win-ico"/></svg>
          <span class="w10name">Inferr...</span>
          <div class="w10caps inf-caps">
            <svg viewBox="0 0 12 12"><path d="M1 6h10"/></svg>
            <svg viewBox="0 0 12 12" class="faint"><path d="M1.500 1.500h9v9h-9z"/></svg>
            <svg viewBox="0 0 12 12"><path d="M1 1l10 10M11 1L1 11"/></svg>
          </div>
        </div>
        <div class="done">Done...</div>
        <div class="infgrid">
          <span class="ilab">Inferred Jitter:</span><output class="ival">46ps p-p</output>
          <span class="ilab">Frequency:</span><output class="ival">229,6Hz</output>
          <span class="ilab">Find sidebands:</span>
          <div class="sbs"><button class="sb">&gt; - &lt;</button><button class="sb">&lt; + &gt;</button></div>
        </div>
      </section>

      <!-- FFT readings -->
      <section class="fft a">
        <div class="ffttitle">
          <svg class="fico"><use href="#logo"/></svg><span class="fname">FFT Reading</span>
          <div class="wbtns">
            <i class="wb"><svg><use href="#w-min"/></svg></i>
            <i class="wb"><svg><use href="#w-max"/></svg></i>
            <i class="wb"><svg><use href="#w-close"/></svg></i>
          </div>
        </div>
        <div class="fftclient">
          <div class="fftlabel">JTest Sidebands + Noise&nbsp; (Channel A)</div>
          <div class="fftmain">
            <div class="fftdisp">
              <div class="bigval">-84.0 dB</div>
              <div class="scale"><span>-140.0</span><span>10.0</span></div>
              <div class="meter"><div class="ticks"></div><div class="fill"></div></div>
            </div>
            <div class="side">
              <i class="sd"><svg><use href="#sd-m"/></svg></i>
              <i class="sd"><svg><use href="#sd-g"/></svg></i>
              <i class="sd"><svg><use href="#sd-t"/></svg></i>
              <i class="sd"><svg><use href="#sd-a"/></svg></i>
            </div>
          </div>
        </div>
      </section>

      <section class="fft b">
        <div class="ffttitle">
          <svg class="fico"><use href="#logo"/></svg><span class="fname">FFT Reading</span>
          <div class="wbtns">
            <i class="wb"><svg><use href="#w-min"/></svg></i>
            <i class="wb"><svg><use href="#w-max"/></svg></i>
            <i class="wb redx"><svg><use href="#w-close"/></svg></i>
          </div>
        </div>
        <div class="fftclient">
          <div class="fftlabel">JTest Sidebands + Noise (Channel B)</div>
          <div class="fftmain">
            <div class="fftdisp">
              <div class="bigval">-84.0 dB</div>
              <div class="scale"><span>-140.0</span><span>10.0</span></div>
              <div class="meter"><div class="ticks"></div><div class="fill"></div></div>
            </div>
            <div class="side">
              <i class="sd"><svg><use href="#sd-m"/></svg></i>
              <i class="sd"><svg><use href="#sd-g"/></svg></i>
              <i class="sd"><svg><use href="#sd-t"/></svg></i>
              <i class="sd"><svg><use href="#sd-a"/></svg></i>
            </div>
          </div>
        </div>
      </section>
    </main>

    <footer class="statusbar">
      <span class="help">For Help, press F1</span>
      <svg class="sbi a"><use href="#sb-g"/></svg>
      <svg class="sbi b"><use href="#sb-m"/></svg>
      <span class="cell scard"><small>S/card</small></span>
      <span class="cell arrow">➡</span>
      <span class="cell bal">Bal/unbal</span>
      <span class="cell red xlr">XLR</span>
      <span class="cell red rate"><em>48k</em><em>16</em></span>
      <span class="cell red cs">CS</span>
      <span class="cell eight">8</span>
      <span class="cell empty"></span>
      <span class="page big">Page 1</span>
      <span class="page big">Page 2</span>
      <span class="page big">Page 3</span>
      <span class="page">Page 4</span>
      <span class="page">Page 5</span>
    </footer>
    <div class="strip"></div>
  </div>
</div>
<script src="script.js"></script>
</body>
</html>
```
FILE: styles.css
```css
* { box-sizing: border-box; }
html, body { margin: 0; padding: 0; width: 1920px; height: 1036px; overflow: hidden; background: #000; }
body, button, output { font-family: "Liberation Sans", Arial, sans-serif; font-size: 11px; color: #111; }
.defs { position: absolute; width: 0; height: 0; }
i, em { font-style: normal; }
s { text-decoration: none; }
b { font-weight: normal; }
.app { display: flex; flex-direction: column; width: 1920px; height: 1036px; }

/* App title */
.titlebar { height: 22px; flex: none; background: #6a007f; display: flex; align-items: center; color: #e6dcea; font-size: 12px; letter-spacing: -.35px; }
.logo { width: 14px; height: 13px; margin-left: 3px; }
.apptitle { margin-left: 6px; }
.caption { margin-left: auto; display: flex; gap: 34px; margin-right: 27px; }
.caption svg { width: 12px; height: 12px; fill: none; stroke: #eadfee; stroke-width: 1; }

.content { flex: 1; width: 1910px; display: flex; flex-direction: column; min-height: 0; }
.menubar { height: 22px; flex: none; background: #fff; border-bottom: 1px solid #c8c8c8; display: flex; align-items: center; font-size: 12.4px; color: #222; }
.menubar span:nth-child(1) { margin-left: 8px; }
.menubar span:nth-child(2) { margin-left: 11px; }
.menubar span:nth-child(3) { margin-left: 11.600px; }
.menubar span:nth-child(4) { margin-left: 12px; }
.menubar span:nth-child(5) { margin-left: 14.300px; }
.menubar span:nth-child(6) { margin-left: 10px; }
.menubar span:nth-child(7) { margin-left: 11px; }
.menubar span:nth-child(8) { margin-left: 12.400px; }
.menubar span:nth-child(9) { margin-left: 16px; }
.menubar span:nth-child(10) { margin-left: 13.700px; }
.menubar span:nth-child(11) { margin-left: 15px; }

.toolrow { height: 29px; flex: none; background: #fff; border-bottom: 1px solid #c4c4c4; }
.tools { display: flex; align-items: center; height: 100%; background: #f0f0f0; }
.main-tools { width: 1023px; padding-left: 8px; border-right: 1px solid #d8d8d8; }
.tb { flex: none; width: 22.8px; height: 27px; display: flex; align-items: center; justify-content: center; }
.tc { flex: none; width: 22.8px; height: 27px; display: flex; align-items: center; justify-content: center; }
.tb.on, .tc.on { background: #fafafa; box-shadow: inset 1px 1px 0 #c8c8c8, inset -1px 0 0 #e0e0e0; }
.i { width: 18px; height: 22px; display: block; overflow: visible; }
.il { font-family: "Liberation Sans", Arial, sans-serif; font-size: 6.5px; font-weight: 700; text-anchor: middle; fill: #1a2a58; }
.il.r { fill: #b01818; }
.il.g { fill: #30f070; font-size: 6.500px; }
.il.g2 { fill: #d8ffe8; font-size: 6.500px; }
.il.ab { font-size: 10px; fill: #111; }
.il.sm { font-size: 10px; fill: #1a1a90; }
.il.rd { font-size: 6.500px; fill: #c02020; font-weight: 400; }
.il.sg { font-size: 15px; fill: #bbb; font-weight: 400; }
.drop { flex: none; width: 11px; height: 10px; position: relative; }
.drop::after { content: ""; position: absolute; left: 2px; top: 3px; border: 3px solid transparent; border-top: 4px solid #222; }
.drop.narrow { width: 14px; }
.drop.narrow::after { left: 4px; }
.sep { flex: none; width: 8px; height: 23px; position: relative; }
.sep.wide { width: 12px; }
.sep::after { content: ""; position: absolute; left: 3.500px; top: 0; bottom: 0; width: 1px; background: #c4c4c4; }

.userbar { height: 27px; flex: none; background: #f0f0f0; border-bottom: 2px solid #8c8c8c; display: flex; gap: 6.700px; padding: 4px 0 0 9px; }
.ub { height: 20px; padding: 0; border: 1px solid #d6d6d6; border-right-color: #999; border-bottom: 2px solid #999; background: #f1f1f1; font-size: 11px; letter-spacing: -.25px; color: #222; white-space: nowrap; }
.w90 { width: 90px; } .w84 { width: 84px; } .w82 { width: 82px; } .w55 { width: 55px; }
.w69 { width: 69px; } .w66 { width: 66px; } .w76 { width: 76px; } .w71 { width: 71px; } .w92 { width: 92px; }

.desktop { flex: 1; position: relative; background: #ababab; min-height: 0; overflow: hidden; }

/* Win10 style floating windows */
.win10 { position: absolute; background: #f0f0f0; border-radius: 7px 7px 0 0; display: flex; flex-direction: column; }
.w10title { flex: none; height: 24px; background: #fff; border-radius: 7px 7px 0 0; display: flex; align-items: center; }
.wico { width: 16px; height: 16px; margin-left: 3px; }
.w10name { margin-left: 5px; font-size: 11px; color: #9a9a9a; }
.w10caps { margin-left: auto; display: flex; }
.w10caps svg { width: 11px; height: 11px; fill: none; stroke: #8c8c8c; stroke-width: 1; }
.w10caps .faint { stroke: #ececec; }
.da-caps { gap: 36px; margin-right: 18px; }
.inf-caps { gap: 33px; margin-right: 17px; }

.da { left: 13px; top: 11px; width: 319px; height: 267px; }
.blackpanel { flex: none; height: 133px; background: #000; color: #35bcb0; font-size: 10.5px; }
.ready { height: 21px; padding: 4px 0 0 5px; border-bottom: 1px solid #505050; font-size: 11px; }
.log { padding: 0 0 0 5px; line-height: 14px; }
.daform { display: grid; grid-template-columns: 102px 103px 103px; column-gap: 3px; grid-template-rows: 19px 19px 21px 22px 19px; padding: 8px 0 0 2px; font-size: 11px; align-items: center; }
.lab { padding-left: 7px; color: #222; letter-spacing: -.1px; }
.rad { display: flex; align-items: center; gap: 5px; padding-left: 1px; color: #222; }
.radio { width: 10px; height: 10px; border-radius: 50%; border: 1px solid #999; background: #fff; border-left-color: #555; border-top-color: #555; position: relative; }
.radio.checked::after { content: ""; position: absolute; left: 2px; top: 2px; width: 4px; height: 4px; border-radius: 50%; background: #111; }
.sel { display: flex; align-items: center; justify-content: space-between; height: 18px; background: #fff; border: 1px solid #999; border-left-color: #777; border-top-color: #777; box-shadow: inset 1px 1px 0 #d8d8d8; padding-left: 3px; font-size: 11px; color: #222; }
.sel b { flex: none; width: 15px; height: 16px; background: #f0f0f0; border-right: 1px solid #888; border-bottom: 2px solid #888; position: relative; }
.sel b::after { content: ""; position: absolute; left: 3px; top: 6px; border: 4px solid transparent; border-top: 4px solid #111; }
.span2 { grid-column: span 2; }
.indent { padding-left: 8px; }
.pb { height: 17px; padding: 0; align-self: end; background: #f0f0f0; border: 1px solid #f8f8f8; border-right-color: #777; border-bottom-color: #777; box-shadow: inset -1px -1px 0 #bbb; font-size: 11px; color: #222; }
.daform .run { grid-column: span 2; background: #58f85a; }

/* Aero windows */
.aero { position: absolute; background: #d9e5f1; border: 1px solid #8e979f; border-radius: 6px 6px 0 0; box-shadow: 1px 1px 0 #6f6f6f; display: flex; flex-direction: column; }
.aerotitle { flex: none; display: flex; align-items: center; background: linear-gradient(#c6d4e1, #d9e5f0); border-radius: 6px 6px 0 0; }
.aname { color: #9aa4ae; font-size: 12px; }
.wbtns { margin-left: auto; display: flex; }
.wb { display: block; width: 31px; height: 19px; border: 1px solid #9db0c4; border-radius: 3px; background: linear-gradient(#dbe6f2, #c9d8e8); box-shadow: inset 0 0 0 1px rgba(255,255,255,.35); }
.wb svg { display: block; width: 100%; height: 100%; }

.det { left: 7px; top: 462px; width: 304px; height: 150px; }
.det .aerotitle { height: 30px; padding: 3px 9px 0 9px; background: #d4e0ec; }
.aico { width: 17px; height: 15px; }
.det .aname { margin-left: 3px; color: #a0aab4; font-size: 12px; }
.det .wbtns { gap: 2px; }
.det .wb { width: 31px; }
.det .wb:first-child { width: 22px; margin-right: 11px; }
.detbody { margin: 0 7px 10px 7px; flex: 1; background: #f4f4f4; border-top: 2px solid #a8b0b8; border-left: 1px solid #9aa; padding: 0 0 0 6px; font-size: 11.5px; color: #222; }
.dethead { display: flex; padding-left: 81px; height: 19px; align-items: center; gap: 16px; letter-spacing: -.3px; }
.dethead span { width: 49px; white-space: nowrap; }
.detrow { display: flex; align-items: center; height: 20px; letter-spacing: -.05px; }
.detlab { width: 77px; white-space: nowrap; font-size: 11px; }
.lcd { width: 57px; height: 17px; background: #000; color: #34b6a8; text-align: right; padding-right: 1px; font-size: 11.5px; line-height: 17px; margin-right: 7px; border: 1px solid #555; }
.detsel { width: 68px; height: 18px; margin-left: 1px; }
.detcut { margin-top: 5px; height: 14px; }
.detcut.in { margin-top: 10px; }

.legend { position: absolute; left: 27px; top: 532px; width: 279px; height: 127px; background: #f0f0f0; border: 1px solid #6a007f; border-top: 0; border-radius: 4px; box-shadow: 0 0 1px #6a007f; display: flex; flex-direction: column; overflow: hidden; }
.legtitle { flex: none; height: 31px; background: #6a007f; color: #e8d8ee; display: flex; align-items: center; justify-content: space-between; padding: 0 0 0 9px; font-size: 12px; letter-spacing: .3px; }
.legx { width: 19px; height: 18px; margin-right: 1px; border: 0; padding: 0; background: #c45060; color: #fff; font-size: 11px; font-weight: 700; }
.leglist { list-style: none; margin: 1px 0 0; padding: 0; flex: 1; }
.leglist li { height: 16px; display: flex; align-items: center; font-size: 11px; letter-spacing: .1px; color: #333; position: relative; white-space: nowrap; }
.chk { display: block; flex: none; width: 11px; height: 12px; margin: 0 3px 0 3px; background: #fff; border: 1px solid #888; border-top-color: #333; border-left-color: #333; }
.chk svg { display: block; width: 10px; height: 10px; }
.lic { width: 16px; height: 14px; flex: none; }
.lc { width: 13px; margin-left: 5px; flex: none; }
.ln { flex: none; }
.hi { display: flex; align-items: center; height: 16px; width: 230px; background: #0078d7; color: #cfe6fb; position: relative; }
.sel-row .lic { position: relative; z-index: 1; }
.doc { position: absolute; left: 265px; top: 2px; width: 14px; height: 12px; color: #112; }
.doc.off { color: #b4b4b4; }

/* DAC */
.dac { left: 341px; top: 6px; width: 1534px; height: 717px; }
.dactitle { height: 31px; padding: 2px 9px 0 9px; }
.dico { width: 15px; height: 14px; margin-right: 5px; }
.dac .wbtns { gap: 3px; }
.dacclient { flex: 1; margin: 0 6px 0 7px; background: #fff; display: flex; flex-direction: column; min-height: 0; }
.toolrow2 { flex: none; height: 29px; background: #fff; border-top: 1px solid #b8c0c8; }
.dac-tools { width: 678px; padding: 0 0 2px 5px; border-right: 1px solid #d8d8d8; }
.plot { flex: none; height: 579px; width: 1517px; }
.plotsvg { display: block; width: 1517px; height: 579px; }
.plotbg { fill: #00007f; }
.railgrey { fill: #8a8a8a; }
.railblue { fill: #1280e8; }
.ylabels text { font-family: "Liberation Sans", Arial, sans-serif; font-size: 11.500px; fill: #2f5fdc; text-anchor: end; }
.xlabels text { font-family: "Liberation Sans", Arial, sans-serif; font-size: 11.500px; fill: #3a66d8; text-anchor: middle; }
.xlabels .start { text-anchor: start; }
.xlabels .end { text-anchor: end; }
.gridh, .gridv { stroke: #c8c8f4; stroke-width: 1; stroke-dasharray: 5 3; shape-rendering: crispEdges; }
.gridbase { stroke: #a4a4d0; stroke-width: 1; shape-rendering: crispEdges; }
.gridaxis { stroke: #8c8ce8; stroke-width: 1; shape-rendering: crispEdges; }
.trred { fill: none; stroke: #e02030; stroke-width: 1; shape-rendering: crispEdges; }
.trblue { fill: none; stroke: #0f80ff; stroke-width: 1; shape-rendering: crispEdges; }
.trspike { fill: none; stroke: #6a80d8; stroke-width: 1; shape-rendering: crispEdges; }
.trspikered { fill: none; stroke: #d82838; stroke-width: 1.500; shape-rendering: crispEdges; }
.trpeak { fill: none; stroke: #1484f4; stroke-width: 3.500; stroke-linejoin: round; }
.trline { fill: none; stroke: #3d86e0; stroke-width: 1.500; }
.markers path { fill: none; stroke: #c4c8e8; stroke-width: 1; }
.markers .crossh { stroke: #f0f0f8; }
.hbar { fill: #1880e8; }
.hbartop { fill: #8cc0f0; }
.plotfoot { flex: none; width: 1517px; height: 7px; background: #f0f0f0; border-bottom: 1px solid #777; }

.cursorrow { flex: none; display: flex; align-items: center; font-size: 11.500px; color: #222; }
.cursorrow.first { height: 31px; width: 525px; background: #f0f0f0; padding-left: 5px; border-bottom: 1px solid #fff; }
.cursorrow.second { height: 30px; width: 523px; background: #f0f0f0; padding-left: 6px; }
.axis { width: 15px; color: #555; font-size: 12px; }
.axis.y { width: 19px; padding-left: 8px; margin-left: 0; }
.blk { display: block; height: 21px; line-height: 20px; background: #000; color: #e8e8e8; border: 1px solid #444; padding-left: 5px; font-size: 11.500px; }
.w67 { width: 67px; }
.w27 { width: 27px; padding-left: 7px; }
.w73 { width: 73px; margin-left: 5px; height: 21px; }
.w73 b { height: 19px; }
.w73 b::after { top: 7px; }
.sep.s1 { margin-left: 2px; }
.chk.big { width: 12px; height: 12px; margin: 0 6px 0 1px; }
.rel { width: 40px; letter-spacing: 0; font-size: 11px; }
.sep.s2 { margin: 0 0 0 14px; width: 8px; }
.sep.tight { width: 6px; }
.sep.roomy { width: 10px; }
.ci { width: 20px; height: 20px; display: block; overflow: visible; }
.txt { width: 288px; height: 21px; line-height: 20px; margin-left: 5px; margin-right: 4px; background: #fff; border: 1px solid #999; padding-left: 4px; }
.dacbottom { flex: 1; border-bottom: 1px solid #b8b8b8; }

/* Inferred jitter */
.inferr { left: 778px; top: 178px; width: 200px; height: 100px; border-radius: 7px; overflow: hidden; box-shadow: 0 1px 0 #666; }
.inferr .w10title { height: 25px; }
.inferr .wico { margin-left: 3px; }
.inferr .w10name { font-size: 11.500px; }
.done { flex: none; height: 18px; background: #3f6fa5; color: #dfe8f2; padding-left: 5px; line-height: 18px; font-size: 11.500px; }
.infgrid { flex: 1; display: grid; grid-template-columns: 100px 100px; grid-template-rows: 19px 19px 19px; font-size: 11.500px; }
.ilab { padding-left: 5px; line-height: 19px; letter-spacing: -.2px; color: #222; white-space: nowrap; }
.ival { background: #000; color: #36c0b0; text-align: right; padding-right: 5px; line-height: 19px; display: block; font-size: 11.500px; }
.sbs { display: flex; gap: 1px; }
.sb { flex: 1; padding: 0; height: 18px; background: #f0f0f0; border: 1px solid #f8f8f8; border-right-color: #666; border-bottom: 2px solid #777; font-size: 13.500px; font-weight: 400; word-spacing: 1px; }

/* FFT */
.fft { position: absolute; display: flex; flex-direction: column; }
.fft.a { left: 917px; top: 736px; width: 334px; height: 167px; background: #bfa7aa; box-shadow: 1px 1px 0 #777; border-radius: 3px 3px 0 0; padding: 0 10px 8px 6px; }
.fft.b { left: 1299px; top: 731px; width: 325px; height: 169px; background: #aa0000; border-radius: 5px 5px 0 0; padding: 0 8px 9px 8px; }
.ffttitle { flex: none; display: flex; align-items: center; height: 31px; padding-top: 7px; }
.fico { width: 17px; height: 15px; margin-left: 2px; }
.b .fico { margin-left: 3px; }
.fname { margin-left: 1px; color: #f0e8ea; font-size: 12.500px; font-weight: 700; letter-spacing: -.35px; }
.ffttitle .wbtns { gap: 3px; }
.b .ffttitle .wbtns { margin-right: 3px; }
.ffttitle .wb { width: 31px; }
.b .wb { height: 17px; }
.redx { background: linear-gradient(#d88a8a, #c03030); border-color: #b86868; }
.fftclient { flex: 1; background: #f4f4f4; display: flex; flex-direction: column; min-height: 0; }
.a .fftclient { margin-right: -3px; }
.fftlabel { flex: none; height: 18px; line-height: 17px; padding-left: 2px; background: #fff; font-size: 11.500px; letter-spacing: -.35px; color: #111; white-space: nowrap; }
.b .fftlabel { height: 19px; padding-left: 1px; line-height: 19px; }
.fftmain { flex: 1; display: flex; min-height: 0; }
.fftdisp { width: 291px; margin-left: 2px; background: #000; display: flex; flex-direction: column; padding: 0 2px; }
.b .fftdisp { width: 281px; margin-left: 1px; }
.bigval { flex: none; height: 72px; margin-top: 4px; text-align: center; font-size: 60px; line-height: 70px; color: #1ee6ee; white-space: nowrap; }
.b .bigval { margin-top: 4px; }
.scale { flex: none; display: flex; justify-content: space-between; color: #34b0a8; font-size: 12px; height: 14px; line-height: 14px; padding: 0; margin-top: 1px; }
.meter { flex: none; height: 15px; margin-top: 0; position: relative; border: 1px solid #188a18; background: #000; }
.ticks { position: absolute; inset: 0; background: repeating-linear-gradient(90deg, #188a18 0 1px, transparent 1px 19px); }
.ticks::after { content: ""; position: absolute; left: 0; right: 0; top: 3px; bottom: 3px; background: #000; }
.fill { position: absolute; left: 0; top: 4px; height: 5px; background: #18f018; width: 37%; }
.side { flex: none; width: 22px; margin-left: 5px; display: flex; flex-direction: column; gap: 2px; padding-top: 2px; }
.sd { display: block; width: 20px; height: 19px; background: #d4d4d4; border: 1px solid #eee; border-right-color: #999; border-bottom-color: #999; }
.sd svg { display: block; width: 18px; height: 17px; }

/* Status bar */
.statusbar { flex: none; height: 21px; padding-top: 2px; background: #f0f0f0; display: flex; align-items: center; font-size: 11px; color: #222; }
.help { margin-left: 2px; width: 1309px; font-size: 11px; }
.sbi { height: 18px; flex: none; }
.sbi.a { width: 14px; }
.sbi.b { width: 14px; margin-left: 4px; }
.cell { flex: none; display: flex; align-items: center; justify-content: center; height: 18px; }
.scard { width: 39px; margin-left: 4px; border: 1px solid #dcdcdc; color: #999; }
.scard small { font-size: 9px; margin-top: -5px; }
.arrow { width: 12px; margin-left: 4px; font-size: 10px; color: #111; }
.bal { width: 53px; margin-left: 4px; border: 1px solid #ddd; font-size: 12px; letter-spacing: -.1px; color: #222; white-space: nowrap; }
.red { background: #ff0c0c; color: #b80000; }
.xlr { width: 49px; margin-left: 2px; font-size: 12px; }
.rate { width: 32px; margin-left: 4px; flex-direction: column; font-size: 8px; line-height: 8px; font-weight: 700; }
.cs { width: 11px; margin-left: 4px; font-size: 9px; letter-spacing: -.5px; color: #c00000; }
.eight { width: 55px; margin-left: 8px; border: 1px solid #ddd; font-size: 12px; }
.empty { width: 55px; margin-left: 2px; border: 1px solid #ddd; }
.page { flex: none; height: 17px; line-height: 15px; margin-left: 2px; width: 40px; text-align: center; background: #fbfbfb; border: 1px solid #333; border-top-color: #aaa; border-left-color: #555; border-radius: 2px; font-size: 10.500px; white-space: nowrap; letter-spacing: -.1px; }
.page.big { width: 43px; font-size: 13px; font-weight: 700; letter-spacing: -.4px; }
.empty + .page { margin-left: 4px; }
.strip { flex: none; height: 8px; width: 1920px; background: linear-gradient(90deg, #5a2080 0, #6a2a78 40%, #4a2870 100%); }
```
FILE: script.js
```js
// Draws the simulated FFT spectrum and the plot grid from data.
(function () {
  var NS = 'http://www.w3.org/2000/svg';
  var grid = document.getElementById('grid');
  var X0 = 426, X1 = 1851, Y0 = 204, YB = 705, PEAK = 1081;

  function line(cls, x1, y1, x2, y2) {
    var l = document.createElementNS(NS, 'line');
    l.setAttribute('class', cls);
    l.setAttribute('x1', x1); l.setAttribute('y1', y1);
    l.setAttribute('x2', x2); l.setAttribute('y2', y2);
    grid.appendChild(l);
  }
  for (var d = 0; d < 8; d++) line('gridh', 421, Math.round(Y0 + d * 62.65) + 0.5, X1, Math.round(Y0 + d * 62.65) + 0.5);
  line('gridbase', 421, YB + 0.5, X1, YB + 0.5);
  for (var k = 1; k <= 12; k++) {
    var x = Math.round(X0 + k * 118.75) + 0.5;
    line('gridv', x, Y0, x, YB + 5);
  }
  line('gridaxis', X0 + 0.5, Y0, X0 + 0.5, YB + 5);

  var seed = 20240611;
  function rnd() {
    seed = (seed * 1664525 + 1013904223) >>> 0;
    return seed / 4294967296;
  }
  function envTop(x) {
    var t = 662 + 1.5 * Math.sin(x / 47) + Math.sin(x / 13);
    if (x < PEAK) t -= 7 * Math.exp(-(PEAK - 13 - x) / 28);
    else t -= 11 * Math.exp(-(x - PEAK - 14) / 45);
    if (x > 1790) t += Math.pow((x - 1790) / 61, 2) * 13;
    return t;
  }
  function envBot(x) {
    var b = 682 + 1.5 * Math.sin(x / 61);
    if (x < PEAK) b -= 7 * Math.exp(-(PEAK - 13 - x) / 22);
    else b -= 14 * Math.exp(-(x - PEAK - 14) / 22);
    if (x > 1790) b += Math.pow((x - 1790) / 61, 2) * 17;
    return b;
  }
  var red = '', blue = '';
  for (var px = X0 + 1; px <= X1; px++) {
    if (px > PEAK - 13 && px < PEAK + 14) continue;
    var c = px + 0.5, t = envTop(px), b = envBot(px);
    var rt = rnd() < 0.3 ? t - Math.pow(rnd(), 3) * 7 : t + 2;
    var rb = rnd() < 0.55 ? b + Math.pow(rnd(), 2) * 10 + 1 : b - 2;
    red += 'M' + c + ' ' + rt.toFixed(1) + 'V' + rb.toFixed(1);
    var bt = t - Math.pow(rnd(), 4) * 7 + rnd() * 2;
    var bb = b + Math.pow(rnd(), 5) * 12 - rnd() * 3;
    blue += 'M' + c + ' ' + bt.toFixed(1) + 'V' + bb.toFixed(1);
  }
  document.getElementById('tr-red').setAttribute('d', red);
  document.getElementById('tr-blue').setAttribute('d', blue);

  // Sidebands and harmonics: [x, top, bottom]
  var spikes = [[1067.5, 592, 650], [1095.5, 588, 650], [1064.5, 623, 652], [1100.5, 622, 652],
    [1122.5, 635, 660], [1041.5, 638, 660], [1046.5, 645, 660], [1152.5, 642, 660],
    [1313.5, 558, 660], [1736.5, 530, 660], [427.5, 372, 660], [1139.5, 652, 660]];
  document.getElementById('tr-spikes').setAttribute('d', spikes.map(function (s) {
    return 'M' + s[0] + ' ' + s[1] + 'V' + s[2];
  }).join(''));
  document.getElementById('tr-spikes-red').setAttribute('d',
    'M1313.5 541V558M1736.5 513V530M1139.5 641V660M1069.5 660V680M427 637V655M1618.5 680V703');

  document.getElementById('tr-peak').setAttribute('d',
    'M1065 664L1071 650L1074 613L1077 580L1079 547L1080.5 510L1081.5 490L1082.5 510L1084.5 547L1087 580L1090 613L1095 647L1100 665');
  document.getElementById('tr-line').setAttribute('d', 'M1081.5 204V500');
})();
```
